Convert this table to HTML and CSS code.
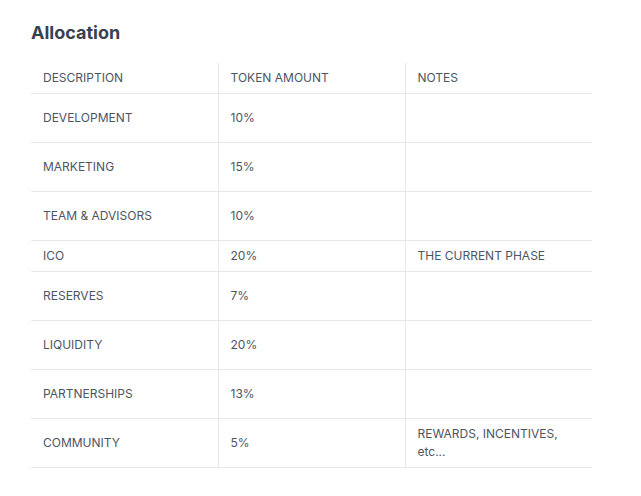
FILE: index.html
```html
<!DOCTYPE html>
<html>
<head>
<meta charset="utf-8">
<link rel="stylesheet" href="styles.css">
</head>
<body>
<div class="wrap">
  <h2 class="title">Allocation</h2>
  <table class="alloc">
    <thead>
      <tr><th>DESCRIPTION</th><th>TOKEN AMOUNT</th><th>NOTES</th></tr>
    </thead>
    <tbody>
      <tr class="tall"><td>DEVELOPMENT</td><td>10%</td><td></td></tr>
      <tr class="tall"><td>MARKETING</td><td>15%</td><td></td></tr>
      <tr class="tall"><td>TEAM &amp; ADVISORS</td><td>10%</td><td></td></tr>
      <tr><td>ICO</td><td>20%</td><td>THE CURRENT PHASE</td></tr>
      <tr class="tall"><td>RESERVES</td><td>7%</td><td></td></tr>
      <tr class="tall"><td>LIQUIDITY</td><td>20%</td><td></td></tr>
      <tr class="tall"><td>PARTNERSHIPS</td><td>13%</td><td></td></tr>
      <tr class="tall"><td>COMMUNITY</td><td>5%</td><td>REWARDS, INCENTIVES,<br>etc...</td></tr>
    </tbody>
  </table>
</div>
</body>
</html>
```
FILE: styles.css
```css
html, body {
  margin: 0;
  padding: 0;
  background: #ffffff;
}
body {
  font-family: Inter, "Noto Sans", sans-serif;
}
.wrap {
  padding: 21px 0 0 31px;
  width: 561px;
}
.title {
  margin: 0;
  font-size: 18px;
  line-height: 24px;
  font-weight: 700;
  color: #374151;
}
.alloc {
  margin-top: 18px;
  width: 561px;
  border-collapse: collapse;
  table-layout: fixed;
  font-size: 12px;
  color: #4b5563;
}
.alloc th, .alloc td {
  text-align: left;
  font-weight: 400;
  padding: 6px 12px 6px 12px;
  line-height: 18px;
  height: 18px;
  vertical-align: middle;
  border-bottom: 1px solid #e5e7eb;
  border-left: 1px solid #e5e7eb;
}
.alloc th:first-child, .alloc td:first-child {
  border-left: none;
}
.alloc tr.tall td {
  height: 36px;
}
```
